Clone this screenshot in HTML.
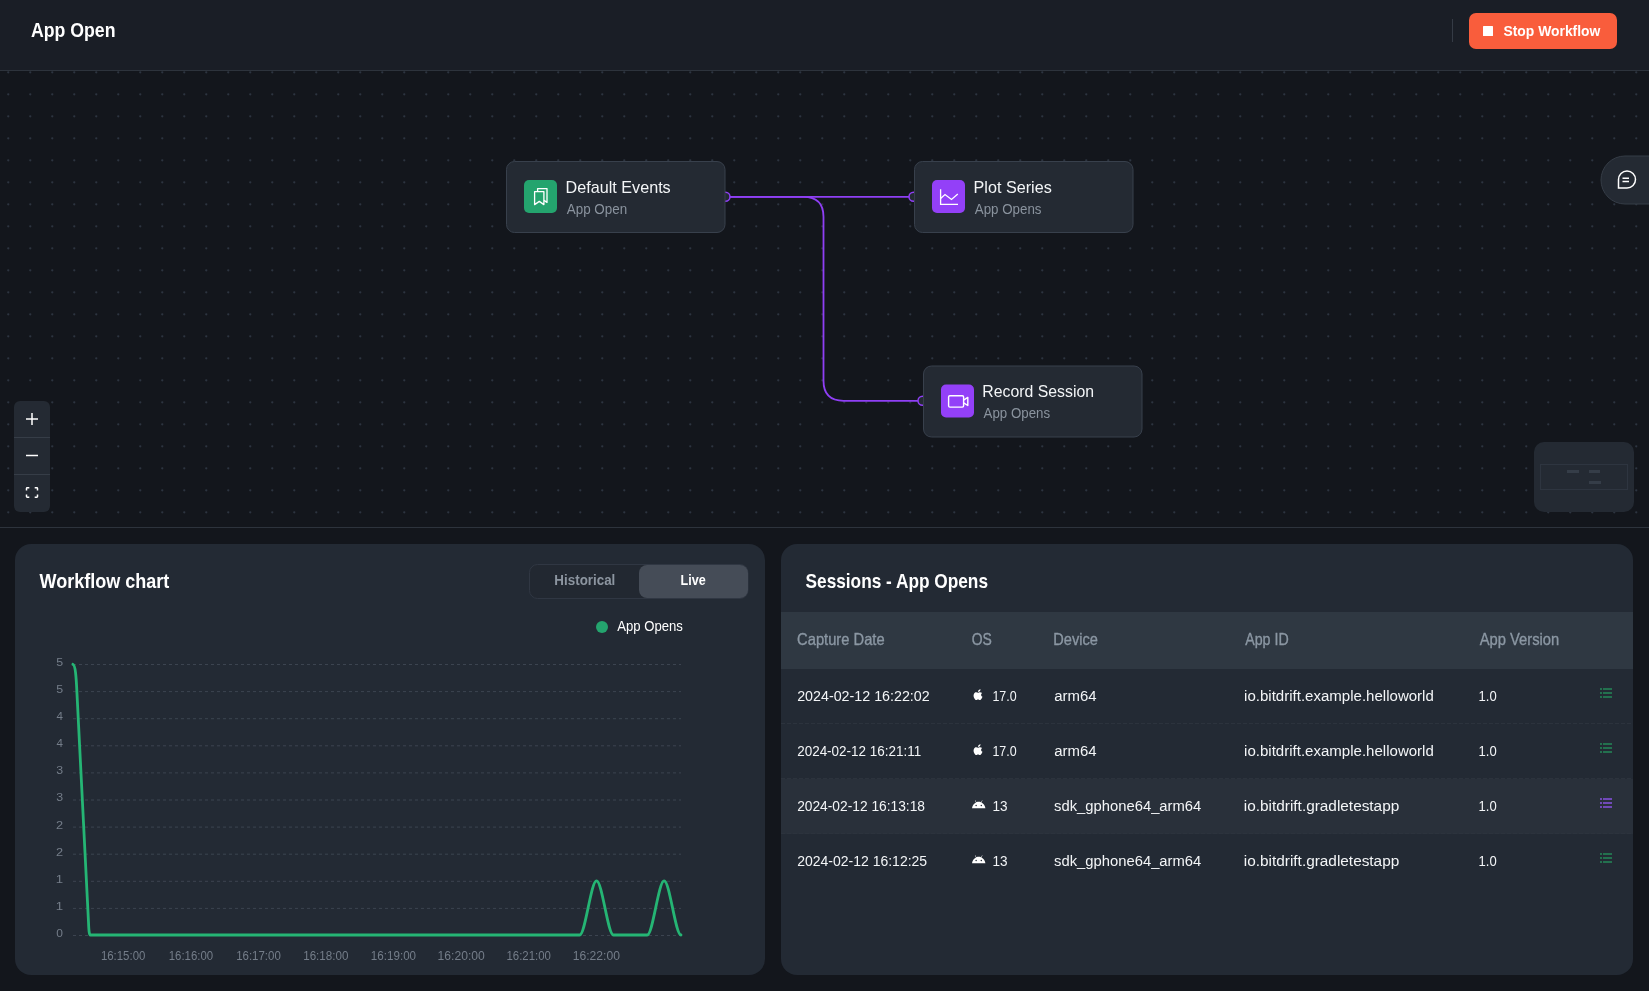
<!DOCTYPE html>
<html><head><meta charset="utf-8"><title>App Open</title>
<style>html,body{margin:0;padding:0;width:1649px;height:991px;overflow:hidden;background:#13161c}svg{display:block}</style>
</head><body>
<div style="will-change:transform;width:1649px;height:991px"><svg width="1649" height="991" viewBox="0 0 1649 991" font-family="'Liberation Sans', sans-serif">
<rect x="0.00" y="0.00" width="1649.00" height="70.00" fill="#1a1e26"/>
<rect x="0.00" y="70.00" width="1649.00" height="1.00" fill="#2d333c"/>
<text x="0" y="37.00" font-size="19.80" font-weight="bold" fill="#ffffff" transform="matrix(0.8937 0 0 1 31.02 0)">App Open</text>
<rect x="1452.00" y="19.00" width="1.00" height="23.00" fill="#353b45"/>
<rect x="1469.00" y="13.00" width="148.00" height="36.00" fill="#f95d3c" rx="7.00"/>
<rect x="1483.00" y="26.00" width="10.00" height="10.00" fill="#ffffff" rx="0.50"/>
<text x="0" y="35.90" font-size="14.50" font-weight="bold" fill="#ffffff" transform="matrix(0.9580 0 0 1 1503.48 0)">Stop Workflow</text>
<rect x="0.00" y="71.00" width="1649.00" height="456.00" fill="#13161c"/>
<defs><pattern id="dots" x="7" y="71" width="22" height="22" patternUnits="userSpaceOnUse"><circle cx="1.25" cy="1.3" r="1.1" fill="#2c3440"/></pattern></defs>
<rect x="0.00" y="71.00" width="1649.00" height="456.00" fill="url(#dots)"/>
<rect x="0.00" y="527.00" width="1649.00" height="1.00" fill="#2d333c"/>
<g fill="none" stroke="#8f3ff5" stroke-width="1.8">
<path d="M726,196.8 H913"/>
<path d="M726,196.8 H803.5 Q823.5,196.8 823.5,216.8 V380.8 Q823.5,400.8 843.5,400.8 H922"/>
</g>
<circle cx="725.5" cy="196.8" r="4.5" fill="#242a33" stroke="#8f3ff5" stroke-width="1.5"/>
<circle cx="913.5" cy="196.8" r="4.5" fill="#242a33" stroke="#8f3ff5" stroke-width="1.5"/>
<circle cx="922.5" cy="400.8" r="4.5" fill="#242a33" stroke="#8f3ff5" stroke-width="1.5"/>
<rect x="506.50" y="161.50" width="218.50" height="71.00" fill="#242a33" rx="8.00" stroke="#38404c" stroke-width="1.00"/>
<rect x="524.00" y="180.00" width="33.00" height="33.00" fill="#24a46e" rx="5.00"/>
<g transform="translate(524.0 180.0)" fill="none" stroke="#fff" stroke-width="1.3" stroke-linejoin="round"><path d="M10.6,11.6 H19.9 V24.6 L15.3,21.4 L10.6,24.6 Z"/><path d="M13.6,11.6 V8.6 H23 V22.4 L20,20.4"/></g>
<text x="0" y="193.00" font-size="16.00" font-weight="normal" fill="#f3f5f7" transform="matrix(1.0117 0 0 1 565.54 0)">Default Events</text>
<text x="0" y="213.60" font-size="13.80" font-weight="normal" fill="#8a939e" transform="matrix(0.9711 0 0 1 566.80 0)">App Open</text>
<rect x="914.50" y="161.50" width="218.50" height="71.00" fill="#242a33" rx="8.00" stroke="#38404c" stroke-width="1.00"/>
<rect x="932.00" y="180.00" width="33.00" height="33.00" fill="#9340f8" rx="5.00"/>
<g transform="translate(932.0 180.0)" fill="none" stroke="#fff" stroke-width="1.3"><path d="M8.6,9.3 V24.3 H26"/><path d="M8.6,18.5 L13,14.5 L19.5,19.5 L25.8,14"/></g>
<text x="0" y="193.00" font-size="16.00" font-weight="normal" fill="#f3f5f7" transform="matrix(1.0117 0 0 1 973.54 0)">Plot Series</text>
<text x="0" y="213.60" font-size="13.80" font-weight="normal" fill="#8a939e" transform="matrix(0.9677 0 0 1 974.80 0)">App Opens</text>
<rect x="923.50" y="366.00" width="218.50" height="71.00" fill="#242a33" rx="8.00" stroke="#38404c" stroke-width="1.00"/>
<rect x="941.00" y="384.50" width="33.00" height="33.00" fill="#9340f8" rx="5.00"/>
<g transform="translate(941.0 384.5)" fill="none" stroke="#fff" stroke-width="1.4" stroke-linejoin="round"><rect x="7.6" y="11.3" width="15" height="11.3" rx="1.3"/><path d="M22.6,15.6 L26.8,12.9 V21 L22.6,18.3"/></g>
<text x="0" y="397.20" font-size="16.00" font-weight="normal" fill="#f3f5f7" transform="matrix(0.9892 0 0 1 982.36 0)">Record Session</text>
<text x="0" y="418.10" font-size="13.80" font-weight="normal" fill="#8a939e" transform="matrix(0.9648 0 0 1 983.60 0)">App Opens</text>
<rect x="14.00" y="401.00" width="36.00" height="111.00" fill="#242a33" rx="6.00"/>
<rect x="14.00" y="437.00" width="36.00" height="1.00" fill="#363d47"/>
<rect x="14.00" y="474.00" width="36.00" height="1.00" fill="#363d47"/>
<g stroke="#fff" stroke-width="1.5" fill="none"><path d="M32,413 V425 M26,419 H38"/><path d="M26,455.5 H38"/><path d="M26.5,490.5 V488.5 Q26.5,487.8 27.2,487.8 H29.3 M34.7,487.8 H36.8 Q37.5,487.8 37.5,488.5 V490.5 M37.5,494.5 V496.5 Q37.5,497.2 36.8,497.2 H34.7 M29.3,497.2 H27.2 Q26.5,497.2 26.5,496.5 V494.5"/></g>
<rect x="1601.00" y="156.00" width="80.00" height="48.00" fill="#242a33" rx="24.00" stroke="#353c46" stroke-width="1.00"/>
<g transform="translate(1626 179.5)" fill="none" stroke="#fff" stroke-width="1.5"><path d="M-7.5,8.5 V0 A8.5,8.5 0 1 1 1,8.5 Z"/><path d="M-3.5,-1.2 H3 M-3.5,2 H3"/></g>
<rect x="1534.00" y="442.00" width="100.00" height="70.00" fill="#242a33" rx="10.00"/>
<rect x="1540.50" y="464.50" width="87.00" height="25.00" fill="none" stroke="#2e3540" stroke-width="1.00"/>
<rect x="1567.00" y="470.00" width="12.00" height="3.00" fill="#353d48"/>
<rect x="1589.00" y="470.00" width="11.00" height="3.00" fill="#353d48"/>
<rect x="1589.00" y="481.00" width="12.00" height="3.00" fill="#353d48"/>
<rect x="0.00" y="528.00" width="1649.00" height="463.00" fill="#13161c"/>
<rect x="15.00" y="544.00" width="750.00" height="431.00" fill="#232a34" rx="16.00"/>
<rect x="781.00" y="544.00" width="852.00" height="431.00" fill="#232a34" rx="16.00"/>
<text x="0" y="587.80" font-size="19.50" font-weight="bold" fill="#ffffff" transform="matrix(0.9238 0 0 1 39.50 0)">Workflow chart</text>
<rect x="529.50" y="564.50" width="218.50" height="34.00" fill="#222831" rx="8.00" stroke="#303743" stroke-width="1.00"/>
<rect x="639.00" y="565.00" width="109.00" height="33.00" fill="#454c57" rx="8.00"/>
<text x="0" y="585.00" font-size="14.00" font-weight="bold" fill="#8c95a0" transform="matrix(0.9566 0 0 1 554.36 0)">Historical</text>
<text x="0" y="585.00" font-size="14.00" font-weight="bold" fill="#ffffff" transform="matrix(0.8996 0 0 1 680.61 0)">Live</text>
<circle cx="602" cy="627" r="6" fill="#24a46e"/>
<text x="0" y="631.40" font-size="14.00" font-weight="normal" fill="#ffffff" transform="matrix(0.9381 0 0 1 617.20 0)">App Opens</text>
<g stroke="#3c4450" stroke-width="1" stroke-dasharray="3 3"><line x1="73" y1="664.5" x2="681" y2="664.5"/><line x1="73" y1="691.6" x2="681" y2="691.6"/><line x1="73" y1="718.7" x2="681" y2="718.7"/><line x1="73" y1="745.8" x2="681" y2="745.8"/><line x1="73" y1="772.9" x2="681" y2="772.9"/><line x1="73" y1="800.0" x2="681" y2="800.0"/><line x1="73" y1="827.1" x2="681" y2="827.1"/><line x1="73" y1="854.2" x2="681" y2="854.2"/><line x1="73" y1="881.3" x2="681" y2="881.3"/><line x1="73" y1="908.4" x2="681" y2="908.4"/><line x1="73" y1="935.5" x2="681" y2="935.5"/></g>
<text x="0" y="666.00" font-size="11.50" font-weight="normal" fill="#747d89" transform="matrix(1.0771 0 0 1 56.21 0)">5</text>
<text x="0" y="693.10" font-size="11.50" font-weight="normal" fill="#747d89" transform="matrix(1.0771 0 0 1 56.21 0)">5</text>
<text x="0" y="720.20" font-size="11.50" font-weight="normal" fill="#747d89" transform="matrix(1.0119 0 0 1 56.42 0)">4</text>
<text x="0" y="747.30" font-size="11.50" font-weight="normal" fill="#747d89" transform="matrix(1.0119 0 0 1 56.42 0)">4</text>
<text x="0" y="774.40" font-size="11.50" font-weight="normal" fill="#747d89" transform="matrix(1.0771 0 0 1 56.21 0)">3</text>
<text x="0" y="801.50" font-size="11.50" font-weight="normal" fill="#747d89" transform="matrix(1.0771 0 0 1 56.21 0)">3</text>
<text x="0" y="828.60" font-size="11.50" font-weight="normal" fill="#747d89" transform="matrix(1.1130 0 0 1 56.00 0)">2</text>
<text x="0" y="855.70" font-size="11.50" font-weight="normal" fill="#747d89" transform="matrix(1.1130 0 0 1 56.00 0)">2</text>
<text x="0" y="882.80" font-size="11.50" font-weight="normal" fill="#747d89" transform="matrix(1.1514 0 0 1 55.77 0)">1</text>
<text x="0" y="909.90" font-size="11.50" font-weight="normal" fill="#747d89" transform="matrix(1.1514 0 0 1 55.77 0)">1</text>
<text x="0" y="937.00" font-size="11.50" font-weight="normal" fill="#747d89" transform="matrix(1.0435 0 0 1 56.23 0)">0</text>
<text x="0" y="959.90" font-size="12.20" font-weight="normal" fill="#747d89" transform="matrix(0.9370 0 0 1 100.89 0)">16:15:00</text>
<text x="0" y="959.90" font-size="12.20" font-weight="normal" fill="#747d89" transform="matrix(0.9370 0 0 1 168.69 0)">16:16:00</text>
<text x="0" y="959.90" font-size="12.20" font-weight="normal" fill="#747d89" transform="matrix(0.9413 0 0 1 236.18 0)">16:17:00</text>
<text x="0" y="959.90" font-size="12.20" font-weight="normal" fill="#747d89" transform="matrix(0.9521 0 0 1 303.17 0)">16:18:00</text>
<text x="0" y="959.90" font-size="12.20" font-weight="normal" fill="#747d89" transform="matrix(0.9521 0 0 1 370.87 0)">16:19:00</text>
<text x="0" y="959.90" font-size="12.20" font-weight="normal" fill="#747d89" transform="matrix(0.9952 0 0 1 437.54 0)">16:20:00</text>
<text x="0" y="959.90" font-size="12.20" font-weight="normal" fill="#747d89" transform="matrix(0.9370 0 0 1 506.49 0)">16:21:00</text>
<text x="0" y="959.90" font-size="12.20" font-weight="normal" fill="#747d89" transform="matrix(0.9952 0 0 1 572.74 0)">16:22:00</text>
<path d="M72.9,664.3 C75.3,665 76.2,676 77,694 L88.5,922 C88.8,930 89.2,935 90.3,935 L579.65,935 C585.28,935 590.91,880.8 596.54,880.8 C602.17,880.8 607.8,935 613.43,935 L647.22,935 C652.85,935 658.48,880.8 664.11,880.8 C669.74,880.8 675.37,935 681,935" fill="none" stroke="#25b574" stroke-width="2.8" stroke-linecap="round" stroke-linejoin="round"/>
<text x="0" y="587.90" font-size="19.50" font-weight="bold" fill="#ffffff" transform="matrix(0.8851 0 0 1 805.53 0)">Sessions - App Opens</text>
<rect x="781.00" y="612.00" width="852.00" height="57.00" fill="#2f3842"/>
<text x="0" y="645.00" font-size="16.30" font-weight="normal" fill="#8b97a3" transform="matrix(0.9034 0 0 1 797.11 0)" stroke="#8b97a3" stroke-width="0.35">Capture Date</text>
<text x="0" y="645.00" font-size="16.30" font-weight="normal" fill="#8b97a3" transform="matrix(0.8551 0 0 1 971.75 0)" stroke="#8b97a3" stroke-width="0.35">OS</text>
<text x="0" y="645.00" font-size="16.30" font-weight="normal" fill="#8b97a3" transform="matrix(0.8958 0 0 1 1053.26 0)" stroke="#8b97a3" stroke-width="0.35">Device</text>
<text x="0" y="645.00" font-size="16.30" font-weight="normal" fill="#8b97a3" transform="matrix(0.8728 0 0 1 1245.20 0)" stroke="#8b97a3" stroke-width="0.35">App ID</text>
<text x="0" y="645.00" font-size="16.30" font-weight="normal" fill="#8b97a3" transform="matrix(0.9048 0 0 1 1479.70 0)" stroke="#8b97a3" stroke-width="0.35">App Version</text>
<text x="0" y="701.00" font-size="15.50" font-weight="normal" fill="#f3f5f7" transform="matrix(0.9223 0 0 1 797.13 0)">2024-02-12 16:22:02</text>
<g transform="translate(973.3 689.0) scale(0.95)"><path fill="#fff" d="M7.6,0.2C7.7,1 7.3,1.8 6.8,2.3 6.3,2.8 5.6,3.1 5,3.1 4.9,2.3 5.3,1.6 5.8,1.1 6.3,0.6 7,0.3 7.6,0.2ZM9.3,4.1C8.6,4.5 8.2,5.2 8.2,6 8.2,7 8.8,7.8 9.7,8.2 9.5,8.8 9.2,9.4 8.8,10 8.3,10.8 7.7,11.6 6.9,11.6 6.1,11.6 5.9,11.1 5,11.1 4.1,11.1 3.8,11.6 3.1,11.6 2.3,11.7 1.7,10.8 1.2,10 0.2,8.4 -0.1,6.1 0.9,4.7 1.4,3.9 2.2,3.4 3,3.4 3.8,3.4 4.3,3.9 5,3.9 5.7,3.9 6.1,3.4 7,3.4 7.8,3.4 8.6,3.7 9.3,4.1Z"/></g>
<text x="0" y="701.00" font-size="15.50" font-weight="normal" fill="#f3f5f7" transform="matrix(0.8052 0 0 1 992.42 0)">17.0</text>
<text x="0" y="701.00" font-size="15.50" font-weight="normal" fill="#f3f5f7" transform="matrix(0.9660 0 0 1 1054.13 0)">arm64</text>
<text x="0" y="701.00" font-size="15.50" font-weight="normal" fill="#f3f5f7" transform="matrix(0.9710 0 0 1 1244.06 0)">io.bitdrift.example.helloworld</text>
<text x="0" y="701.00" font-size="15.50" font-weight="normal" fill="#f3f5f7" transform="matrix(0.8419 0 0 1 1478.58 0)">1.0</text>
<g fill="#23704e" transform="translate(1600 688)"><rect x="0" y="0" width="2" height="2"/><rect x="0" y="4" width="2" height="2"/><rect x="0" y="8" width="2" height="2"/><rect x="3" y="0" width="9" height="2"/><rect x="3" y="4" width="9" height="2"/><rect x="3" y="8" width="9" height="2"/></g>
<line x1="781" y1="723.5" x2="1633" y2="723.5" stroke="#2c333d" stroke-width="1" stroke-dasharray="4 2"/>
<text x="0" y="756.00" font-size="15.50" font-weight="normal" fill="#f3f5f7" transform="matrix(0.8690 0 0 1 797.17 0)">2024-02-12 16:21:11</text>
<g transform="translate(973.3 744.0) scale(0.95)"><path fill="#fff" d="M7.6,0.2C7.7,1 7.3,1.8 6.8,2.3 6.3,2.8 5.6,3.1 5,3.1 4.9,2.3 5.3,1.6 5.8,1.1 6.3,0.6 7,0.3 7.6,0.2ZM9.3,4.1C8.6,4.5 8.2,5.2 8.2,6 8.2,7 8.8,7.8 9.7,8.2 9.5,8.8 9.2,9.4 8.8,10 8.3,10.8 7.7,11.6 6.9,11.6 6.1,11.6 5.9,11.1 5,11.1 4.1,11.1 3.8,11.6 3.1,11.6 2.3,11.7 1.7,10.8 1.2,10 0.2,8.4 -0.1,6.1 0.9,4.7 1.4,3.9 2.2,3.4 3,3.4 3.8,3.4 4.3,3.9 5,3.9 5.7,3.9 6.1,3.4 7,3.4 7.8,3.4 8.6,3.7 9.3,4.1Z"/></g>
<text x="0" y="756.00" font-size="15.50" font-weight="normal" fill="#f3f5f7" transform="matrix(0.8052 0 0 1 992.42 0)">17.0</text>
<text x="0" y="756.00" font-size="15.50" font-weight="normal" fill="#f3f5f7" transform="matrix(0.9660 0 0 1 1054.13 0)">arm64</text>
<text x="0" y="756.00" font-size="15.50" font-weight="normal" fill="#f3f5f7" transform="matrix(0.9710 0 0 1 1244.06 0)">io.bitdrift.example.helloworld</text>
<text x="0" y="756.00" font-size="15.50" font-weight="normal" fill="#f3f5f7" transform="matrix(0.8419 0 0 1 1478.58 0)">1.0</text>
<g fill="#23704e" transform="translate(1600 743)"><rect x="0" y="0" width="2" height="2"/><rect x="0" y="4" width="2" height="2"/><rect x="0" y="8" width="2" height="2"/><rect x="3" y="0" width="9" height="2"/><rect x="3" y="4" width="9" height="2"/><rect x="3" y="8" width="9" height="2"/></g>
<rect x="781.00" y="779.00" width="852.00" height="55.00" fill="#29303a"/>
<line x1="781" y1="778.5" x2="1633" y2="778.5" stroke="#2c333d" stroke-width="1" stroke-dasharray="4 2"/>
<text x="0" y="811.00" font-size="15.50" font-weight="normal" fill="#f3f5f7" transform="matrix(0.8887 0 0 1 797.15 0)">2024-02-12 16:13:18</text>
<g transform="translate(971.7 800.0)"><path fill="#fff" d="M0.3,8.3C0.6,5.5 2.2,3.3 4.3,2.4L3.2,0.5 3.6,0.3 4.7,2.2C5.4,1.9 6.2,1.8 7,1.8 7.8,1.8 8.6,1.9 9.3,2.2L10.4,0.3 10.8,0.5 9.7,2.4C11.8,3.3 13.4,5.5 13.7,8.3Z"/><circle cx="4.4" cy="5.6" r="0.75" fill="#29303a"/><circle cx="9.6" cy="5.6" r="0.75" fill="#29303a"/></g>
<text x="0" y="811.00" font-size="15.50" font-weight="normal" fill="#f3f5f7" transform="matrix(0.8757 0 0 1 992.45 0)">13</text>
<text x="0" y="811.00" font-size="15.50" font-weight="normal" fill="#f3f5f7" transform="matrix(0.9555 0 0 1 1054.07 0)">sdk_gphone64_arm64</text>
<text x="0" y="811.00" font-size="15.50" font-weight="normal" fill="#f3f5f7" transform="matrix(0.9921 0 0 1 1243.84 0)">io.bitdrift.gradletestapp</text>
<text x="0" y="811.00" font-size="15.50" font-weight="normal" fill="#f3f5f7" transform="matrix(0.8419 0 0 1 1478.58 0)">1.0</text>
<g fill="#7049b8" transform="translate(1600 798)"><rect x="0" y="0" width="2" height="2"/><rect x="0" y="4" width="2" height="2"/><rect x="0" y="8" width="2" height="2"/><rect x="3" y="0" width="9" height="2"/><rect x="3" y="4" width="9" height="2"/><rect x="3" y="8" width="9" height="2"/></g>
<line x1="781" y1="833.5" x2="1633" y2="833.5" stroke="#2c333d" stroke-width="1" stroke-dasharray="4 2"/>
<text x="0" y="866.00" font-size="15.50" font-weight="normal" fill="#f3f5f7" transform="matrix(0.9034 0 0 1 797.14 0)">2024-02-12 16:12:25</text>
<g transform="translate(971.7 855.0)"><path fill="#fff" d="M0.3,8.3C0.6,5.5 2.2,3.3 4.3,2.4L3.2,0.5 3.6,0.3 4.7,2.2C5.4,1.9 6.2,1.8 7,1.8 7.8,1.8 8.6,1.9 9.3,2.2L10.4,0.3 10.8,0.5 9.7,2.4C11.8,3.3 13.4,5.5 13.7,8.3Z"/><circle cx="4.4" cy="5.6" r="0.75" fill="#232a34"/><circle cx="9.6" cy="5.6" r="0.75" fill="#232a34"/></g>
<text x="0" y="866.00" font-size="15.50" font-weight="normal" fill="#f3f5f7" transform="matrix(0.8757 0 0 1 992.45 0)">13</text>
<text x="0" y="866.00" font-size="15.50" font-weight="normal" fill="#f3f5f7" transform="matrix(0.9555 0 0 1 1054.07 0)">sdk_gphone64_arm64</text>
<text x="0" y="866.00" font-size="15.50" font-weight="normal" fill="#f3f5f7" transform="matrix(0.9921 0 0 1 1243.84 0)">io.bitdrift.gradletestapp</text>
<text x="0" y="866.00" font-size="15.50" font-weight="normal" fill="#f3f5f7" transform="matrix(0.8419 0 0 1 1478.58 0)">1.0</text>
<g fill="#23704e" transform="translate(1600 853)"><rect x="0" y="0" width="2" height="2"/><rect x="0" y="4" width="2" height="2"/><rect x="0" y="8" width="2" height="2"/><rect x="3" y="0" width="9" height="2"/><rect x="3" y="4" width="9" height="2"/><rect x="3" y="8" width="9" height="2"/></g>
</svg></div>
</body></html>
